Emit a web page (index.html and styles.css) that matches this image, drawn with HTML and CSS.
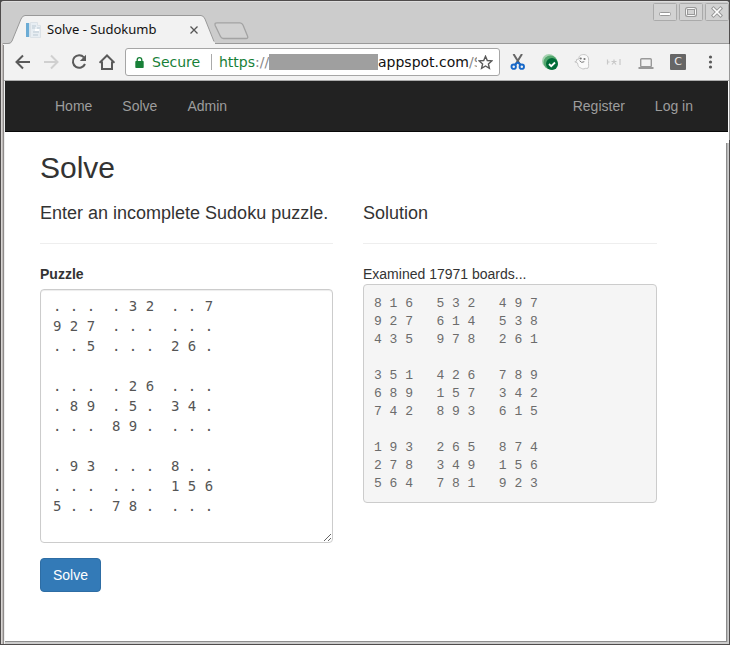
FILE: index.html
```html
<!DOCTYPE html>
<html lang="en">
<head>
<meta charset="utf-8">
<title>Solve - Sudokumb</title>
<link rel="stylesheet" href="styles.css">
</head>
<body>
<div class="window">
  <header class="titlebar">
    <div class="tab">
      <svg class="tab-shape" width="212" height="30" viewBox="0 0 212 30"><path d="M0 28.5H6Q8 28.5 9 26L18 4Q19.500 .5 22 .5H198Q200.500 .5 202 4L211 26Q212 28.500 214 28.500V30H0Z" fill="#f2f2f2"/><path d="M0 28.500H5Q8 28.500 9 26L18 4Q19.500 .5 22 .5H198Q200.500 .5 202 4L211 26.500" fill="none" stroke="#999"/></svg>
      <svg class="favicon" width="16" height="16" viewBox="0 0 16 16"><path d="M0 1h3v14H0z" fill="#6cacd5"/><path d="M3 1h1v14H3z" fill="#d2e2ed"/><path d="M4.500 .5h7v3h3v12h-10z" fill="#e8eef3" stroke="#dce2e7"/><path d="M6 4h4M6 6h3M7 10h6M7 13h5M11 6h3" stroke="#bbc9d3"/><path d="M9 7h4v2H9z" fill="#fff"/></svg>
      <span class="tab-title">Solve - Sudokumb</span>
      <svg class="tab-close" width="8" height="8" viewBox="0 0 8 8"><path d="M.5.5l7 7M7.500.5l-7 7" stroke="#555" stroke-width="1.300"/></svg>
    </div>
    <svg class="newtab" width="35" height="18" viewBox="0 0 35 18"><path d="M3 .8H26Q28 .8 29 3L33.500 14Q34.500 16.500 32 16.500H9.500Q7.500 16.500 6.500 14.500L1.200 3.500Q.3.8 3 .8Z" fill="#d1d1d1" stroke="#a3a3a3" stroke-width="1.300"/></svg>
    <div class="controls">
      <svg width="24" height="18" viewBox="0 0 24 18"><rect class="ctl" x=".5" y=".5" width="23" height="17" rx="1"/><rect x="6.500" y="9.500" width="11" height="3" rx="1" fill="#fff" stroke="#999"/></svg>
      <svg width="24" height="18" viewBox="0 0 24 18"><rect class="ctl" x=".5" y=".5" width="23" height="17" rx="1"/><g fill="none"><rect x="7.500" y="5.500" width="9" height="7" rx="1" stroke="#999" stroke-width="3"/><rect x="7.500" y="5.500" width="9" height="7" rx="1" stroke="#f8f8f8"/></g></svg>
      <svg width="24" height="18" viewBox="0 0 24 18"><rect class="ctl" x=".5" y=".5" width="23" height="17" rx="1"/><g fill="none" stroke-linecap="square"><path d="M8.500 5.500l7 7M15.500 5.500l-7 7" stroke="#999" stroke-width="3.600"/><path d="M8.500 5.500l7 7M15.500 5.500l-7 7" stroke="#fff" stroke-width="1.600"/></g></svg>
    </div>
  </header>

  <div class="toolbar">
    <div class="nav-icons">
      <svg width="16" height="16" viewBox="0 0 16 16"><path d="M15 8H2M8 1.500L1.500 8 8 14.500" fill="none" stroke="#5a5a5a" stroke-width="2"/></svg>
      <svg width="16" height="16" viewBox="0 0 16 16"><path d="M1 8h13M8 1.500L14.500 8 8 14.500" fill="none" stroke="#d0d0d0" stroke-width="2"/></svg>
      <svg width="16" height="16" viewBox="0 0 16 16"><path d="M12.900 3.300A6.300 6.300 0 1 0 14 10" fill="none" stroke="#5a5a5a" stroke-width="2"/><path d="M15 .8V7H8.800Z" fill="#5a5a5a"/></svg>
      <svg width="16" height="16" viewBox="1 0 16 16"><path d="M1.500 8.800L9 1.500l7.500 7.300M4 7.500V15h10V7.500" fill="none" stroke="#5a5a5a" stroke-width="2"/></svg>
    </div>
    <div class="omnibox">
      <svg class="lock" width="9" height="11" viewBox="0 0 9 11"><rect x=".3" y="4" width="8.400" height="7" rx=".7" fill="#188038"/><path d="M2.200 5V3a2.300 2.300 0 0 1 4.600 0v2" fill="none" stroke="#188038" stroke-width="1.300"/></svg>
      <span class="secure">Secure</span>
      <span class="divider"></span>
      <span class="url"><span class="scheme">https</span><span class="dim">://</span></span>
      <span class="mask"></span>
      <span class="host">appspot.com<span class="dim">/S</span></span>
      <svg class="star" width="15" height="15" viewBox="0 0 15 15"><path d="M7.500 1.300l1.800 4.200 4.500.4-3.400 3 1 4.500-3.900-2.400-3.900 2.400 1-4.500-3.400-3 4.500-.4z" fill="none" stroke="#5a5a5a" stroke-width="1.400"/></svg>
    </div>
    <div class="extensions">
      <svg width="16" height="16" viewBox="0 0 16 16"><path d="M3.500 0L10 10.500M12 0L5.500 10.500" stroke="#666" stroke-width="2"/><g fill="none" stroke="#1768c9" stroke-width="1.900"><circle cx="3.700" cy="12.700" r="2.200"/><circle cx="11.800" cy="12.700" r="2.200"/><path d="M5 10.500l2.800-2 2.700 2"/></g></svg>
      <svg width="16" height="16" viewBox="0 0 16 16"><circle cx="7" cy="7" r="7" fill="#a7d3b2"/><circle cx="8.500" cy="8.500" r="7" fill="#54a86f"/><circle cx="10" cy="10" r="6" fill="#006c38"/><path d="M7 10l2.200 2.200L13 8.500" fill="none" stroke="#fff" stroke-width="1.800"/></svg>
      <svg width="16" height="16" viewBox="0 0 16 16"><path d="M5 5C4.500 1 8 .5 10 .6c4 .3 5 3.400 4.500 7-.2 3 .7 4.500-.5 6.500-1.500 1-2-.5-4 .8-2 .3-3-1-4.500-1.500C4 12.500 4 11 3.500 9L.8 7.800l1.800-.6L2.500 5.500Z" fill="#fafafa" stroke="#c4c4c4"/><circle cx="6.700" cy="4.500" r="1.100" fill="#777"/><circle cx="10.500" cy="5" r="1.100" fill="#777"/><path d="M5.500 6.700q2 2.800 4.800 1" stroke="#777" fill="none"/></svg>
      <svg width="16" height="16" viewBox="0 0 16 16"><path d="M1.500 5.500v5M1.500 8h2M14 5v6M8 5.500v3M5.500 7.500h5M8 8l-2 2.500M8 8l2 2.500" fill="none" stroke="#c8c8c8" stroke-width="1.200"/></svg>
      <svg width="16" height="16" viewBox="0 0 16 16"><rect x="2.700" y="4.700" width="10.600" height="8" rx="1" fill="none" stroke="#999" stroke-width="1.400"/><path d="M.5 13h15v2H.5z" fill="#999"/></svg>
      <span class="ext-c">C</span>
      <svg width="16" height="16" viewBox="0 0 16 16"><g fill="#5a5a5a"><circle cx="8.500" cy="3" r="1.600"/><circle cx="8.500" cy="8" r="1.600"/><circle cx="8.500" cy="13" r="1.600"/></g></svg>
    </div>
  </div>

  <div class="page">
    <nav class="navbar">
      <div class="links"><a>Home</a><a>Solve</a><a>Admin</a></div>
      <div class="links"><a>Register</a><a>Log in</a></div>
    </nav>
    <main class="content">
      <h2>Solve</h2>
      <div class="columns">
        <section>
          <h4>Enter an incomplete Sudoku puzzle.</h4>
          <hr>
          <label for="puzzle">Puzzle</label>
          <textarea id="puzzle" spellcheck="false">. . .  . 3 2  . . 7
9 2 7  . . .  . . .
. . 5  . . .  2 6 .

. . .  . 2 6  . . .
. 8 9  . 5 .  3 4 .
. . .  8 9 .  . . .

. 9 3  . . .  8 . .
. . .  . . .  1 5 6
5 . .  7 8 .  . . .</textarea>
          <button class="btn">Solve</button>
        </section>
        <section>
          <h4>Solution</h4>
          <hr>
          <div class="status">Examined 17971 boards...</div>
          <pre>8 1 6   5 3 2   4 9 7
9 2 7   6 1 4   5 3 8
4 3 5   9 7 8   2 6 1

3 5 1   4 2 6   7 8 9
6 8 9   1 5 7   3 4 2
7 4 2   8 9 3   6 1 5

1 9 3   2 6 5   8 7 4
2 7 8   3 4 9   1 5 6
5 6 4   7 8 1   9 2 3</pre>
        </section>
      </div>
    </main>
  </div>
</div>
</body>
</html>
```
FILE: styles.css
```css
* { box-sizing: border-box; }
body { margin: 0; background: #4a4a4a; font-family: "Liberation Sans", Arial, sans-serif; overflow: hidden; }
.window {
  position: relative;
  width: 730px; height: 645px; display: flex; flex-direction: column;
  border: 1px solid #4f4c4c; border-radius: 4px 4px 0 0;
  background: linear-gradient(90deg, #d8d5d3 1px, #bdb9b7 1px, #bdb9b7 2px, #8f8c8b 2px, #8f8c8b 3px, #eee 3px, #eee 4px, #ccc 4px);
}
/* lighter upper part of the right window edge */
.window::before { content: ""; position: absolute; right: -1px; top: 43px; width: 1px; height: 96px; background: #999; }
/* bevel along the lower part of the right window edge */
.window::after { content: ""; position: absolute; right: 0; top: 142px; bottom: 2px; width: 3px; background: linear-gradient(90deg, #8c8c8c 1px, #b8b8b8 1px, #b8b8b8 2px, #ccc 2px); }
.titlebar { height: 42px; flex: none; display: flex; padding-left: 10px; background: #ccc; border-top: 1px solid #dedede; border-radius: 3px 3px 0 0; }
.tab { position: relative; width: 203px; height: 29px; margin-top: 13px; display: flex; align-items: center; padding-left: 15px; }
.tab-shape { position: absolute; left: -8px; top: 0; z-index: 1; width: 212px; }
.favicon, .tab-title, .tab-close { position: relative; z-index: 2; }
.tab-title { margin: 0 0 2px 5px; width: 143px; font: 13px/16px "Noto Sans", sans-serif; color: #111; white-space: nowrap; }
.newtab { margin: 20px 0 0 0; }
.controls { margin: 1px 0 0 auto; display: flex; gap: 2px; }
.ctl { fill: #d2d2d2; stroke: #aaa; }
.toolbar { height: 38px; flex: none; margin: 0 0 0 3px; display: flex; background: #f2f2f2; border-top: 1px solid #999; border-bottom: 1px solid #adadad; }
.nav-icons { display: flex; align-items: center; gap: 12px; padding-left: 11px; width: 121px; }
.omnibox { width: 375px; height: 28px; margin-top: 4px; display: flex; align-items: center; background: #fff; border: 1px solid #a6a6a6; border-radius: 3px; font: 14px/20px "DejaVu Sans", sans-serif; color: #111; white-space: nowrap; }
.lock { margin-left: 9px; flex: none; }
.secure { margin-left: 8px; width: 59px; color: #188038; flex: none; }
.divider { width: 1px; height: 16px; background: #aaa; flex: none; }
.url { margin-left: 7px; width: 50px; flex: none; }
.scheme { color: #188038; }
.dim { color: #888; }
.mask { width: 109px; height: 16px; background: #9f9f9f; flex: none; }
.host { width: 99px; overflow: hidden; flex: none; }
.star { margin-left: 1px; flex: none; }
.extensions { display: flex; align-items: center; gap: 16px; padding-left: 10px; }
.ext-c { width: 16px; height: 16px; border-radius: 1px; background: #666; color: #eee; text-align: center; font: 11px/16px "DejaVu Sans", sans-serif; }
.page { flex: 1; margin: 0 0 2px 4px; background: #fff; border-bottom: 1px solid #8c8c8c; }
.navbar { height: 51px; margin-right: 1px; display: flex; justify-content: space-between; padding: 0 20px 0 35px; background: #222; border-bottom: 1px solid #080808; }
.links { display: flex; }
.links a { padding: 15px; font-size: 14px; line-height: 20px; color: #9d9d9d; }
.content { padding: 19px 0 0 35px; color: #333; font-size: 14px; line-height: 20px; }
h2 { margin: 0 0 19px; font-size: 30px; line-height: 33px; font-weight: 400; }
.columns { display: grid; grid-template-columns: 293px 294px; gap: 30px; }
h4 { margin: 0 0 20px; font-size: 18px; line-height: 20px; font-weight: 400; white-space: nowrap; }
hr { margin: 0 0 20px; border: 0; border-top: 1px solid #eee; }
label { display: block; margin-bottom: 5px; font-weight: 700; }
textarea { display: block; width: 293px; height: 254px; margin: 0 0 15px; padding: 6px 12px; border: 1px solid #ccc; border-radius: 4px; box-shadow: inset 0 1px 1px rgba(0,0,0,.075); font: 14px/20px "DejaVu Sans Mono", monospace; color: #555; resize: both; overflow: hidden; outline: none; }
.btn { display: block; height: 34px; padding: 6px 12px; border: 1px solid #2e6da4; border-radius: 4px; background: #337ab7; color: #fff; font: 14px/20px "Liberation Sans", Arial, sans-serif; }
pre { margin: 0; height: 219px; padding: 9.5px 10px; border: 1px solid #ccc; border-radius: 4px; background: #f5f5f5; color: #6c6c6c; font: 13px/18px "Liberation Mono", monospace; }
```
